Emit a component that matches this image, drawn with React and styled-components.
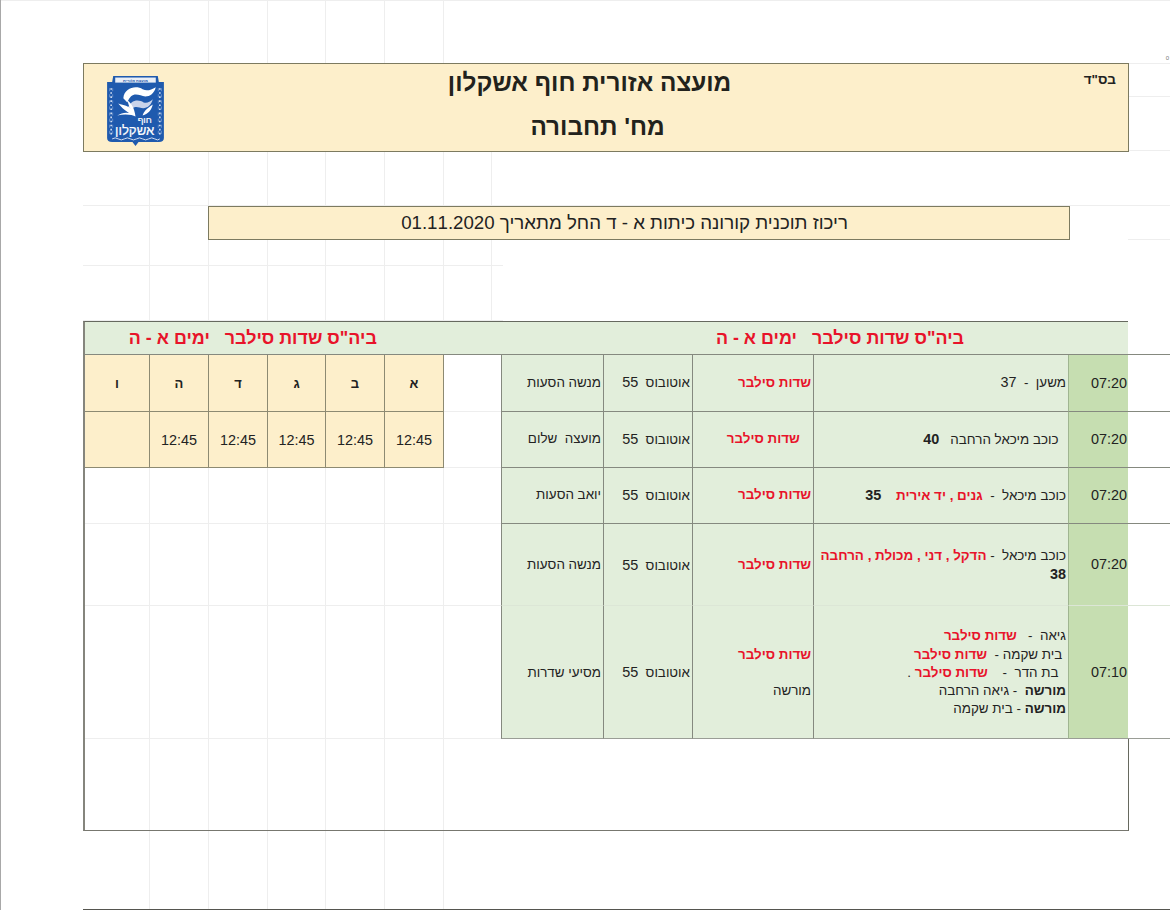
import React from 'react';
import styled, { createGlobalStyle } from 'styled-components';

const GRID = '#eeeeee';
const CREAM = '#fdefcb';
const GREEN = '#e2eedb';
const LINE = '#85897f';
const RED = '#e8132a';

// faint spreadsheet gridlines behind the sheet: [x, y, width, height]
const gridSegments = [
  [0, 0, 1170, 1],
  [149, 0, 1, 910], [208, 0, 1, 910], [267, 0, 1, 910], [325, 0, 1, 910], [384, 0, 1, 910], [443, 0, 1, 910],
  [491, 151, 1, 170],
  [83, 205, 1087, 1], [83, 265, 420, 1], [83, 320, 420, 1],
  [1128, 63, 42, 1], [1128, 96, 42, 1], [1128, 150, 42, 1], [1128, 239, 42, 1],
  [443, 411, 58, 1], [443, 467, 58, 1],
  [83, 523, 418, 1], [83, 605, 418, 1], [83, 738, 418, 1],
];
const gridBackground = gridSegments
  .map(([x, y, w, h]) => `linear-gradient(${GRID},${GRID}) ${x}px ${y}px / ${w}px ${h}px no-repeat`)
  .join(',');

const GlobalStyle = createGlobalStyle`
  html, body {
    margin: 0;
    padding: 0;
    background: #fff;
  }
  body {
    font-family: "Liberation Sans", Arial, sans-serif;
    color: #222;
  }
`;

const Sheet = styled.div`
  position: relative;
  box-sizing: border-box;
  width: 1170px;
  height: 910px;
  overflow: hidden;
  padding: 63px 0 0 83px;
  background: ${gridBackground};
  &::before {
    content: '';
    position: absolute;
    left: 0;
    top: 0;
    bottom: 0;
    width: 1px;
    background: #a8a8a8;
  }
`;
const ZeroMark = styled.span`
  position: absolute;
  right: 1px;
  top: 55px;
  font-size: 6px;
  color: #777;
`;
const Header = styled.header`
  box-sizing: border-box;
  display: grid;
  grid-template-columns: 80px 851px 1fr;
  width: 1046px;
  height: 89px;
  background: ${CREAM};
  border: 1px solid #7c7a60;
`;
const LogoSlot = styled.div`
  padding: 11px 0 0 22px;
`;
const TitleStack = styled.div`
  display: flex;
  flex-direction: column;
  align-items: center;
  gap: 14px;
  padding-top: 4px;
`;
const Title = styled.h1`
  margin: 0;
  padding-left: ${(p) => p.$shift || 0}px;
  font-size: 24.3px;
  line-height: 30px;
  font-weight: bold;
  color: #22221c;
`;
const Blessing = styled.div`
  padding: 7px 12px 0 0;
  font-size: 13.5px;
  line-height: 18px;
  font-weight: bold;
  text-align: right;
`;
const SubtitleBar = styled.div`
  box-sizing: border-box;
  width: 862px;
  height: 34px;
  margin: 54px 0 0 125px;
  padding-right: 29px;
  display: flex;
  align-items: center;
  justify-content: center;
  background: ${CREAM};
  border: 1px solid #7c7a60;
  font-size: 18.7px;
  color: #222;
`;
const Board = styled.section`
  width: 1087px;
  margin-top: 81px;
`;
const Banner = styled.div`
  box-sizing: border-box;
  display: flex;
  gap: 339px;
  width: 1045px;
  height: 34px;
  padding-right: 164px;
  align-items: center;
  background: ${GREEN};
  border-top: 1px solid #66695f;
  border-bottom: 1px solid ${LINE};
  border-left: 2px solid #85857d;
  font-size: 17.9px;
  font-weight: bold;
  color: ${RED};
  white-space: pre;
`;
const Body = styled.div`
  display: flex;
`;
const LeftPane = styled.div`
  box-sizing: border-box;
  width: 418px;
  border-left: 2px solid #85857d;
`;
const DaysGrid = styled.div`
  display: grid;
  direction: rtl;
  grid-template-columns: 60px 59px 58px 59px 59px 64px;
  grid-template-rows: 57px 56px;
  width: 359px;
`;
const DayCell = styled.div`
  display: flex;
  align-items: center;
  justify-content: center;
  background: ${CREAM};
  border-bottom: 1px solid #8d8a72;
  border-left: 1px solid #8d8a72;
  font-size: ${(p) => (p.$head ? '13px' : '14.4px')};
  font-weight: ${(p) => (p.$head ? 'bold' : 'normal')};
  &:nth-child(1), &:nth-child(7) {
    border-right: 1px solid #8d8a72;
  }
  &:nth-child(6), &:nth-child(12) {
    border-left: none;
  }
`;
const TripsGrid = styled.div`
  display: grid;
  direction: rtl;
  grid-template-columns: 42px 60px 255px 121px 89px 102px;
  grid-template-rows: 57px 56px 56px 82px 133px;
  width: 669px;
`;
const Tail = styled.div`
  border-bottom: 1px solid ${(p) => p.$line || LINE};
  box-shadow: ${(p) => (p.$first ? `0 -1px 0 ${LINE}` : 'none')};
`;
const Cell = styled.div`
  display: flex;
  flex-direction: column;
  justify-content: center;
  padding: ${(p) => (p.$nudge ? '2px' : '0')} 2px 0 3px;
  font-size: 13.4px;
  line-height: 18.3px;
  white-space: pre-wrap;
  background: ${GREEN};
  border-bottom: 1px solid ${(p) => p.$line || LINE};
  border-left: 1px solid ${LINE};
`;
const TimeCell = styled(Cell)`
  background: #c6deb1;
  font-size: 14.4px;
  padding: 0 1px 0 2px;
  border-left: 1px solid #9fb590;
`;
const Red = styled.b`
  color: ${RED};
`;
const Num = styled.span`
  font-size: 14.4px;
  font-weight: ${(p) => (p.$bold ? 'bold' : 'normal')};
`;
const Footer = styled.div`
  box-sizing: border-box;
  width: 1046px;
  height: 92px;
  border-left: 2px solid #85857d;
  border-right: 1px solid #66695f;
  border-bottom: 1px solid #77776f;
`;
const BottomRule = styled.div`
  width: 1087px;
  height: 1px;
  margin-top: 78px;
  background: #55554f;
`;
const LogoMark = styled.svg`
  display: block;
  width: 59px;
  height: 71px;
`;

const Logo = () => (
  <LogoMark viewBox="0 0 58 70">
    <path d="M1 7H6L7 1H51L52 7H57V62Q57 66 52 66H32L29 70L26 66H6Q1 66 1 62Z" fill="#1f5aae" />
    <rect x="9" y="2.5" width="40" height="5" fill="#e9eef7" />
    <text x="29" y="6.6" textAnchor="middle" direction="rtl" fontSize="4" fontWeight="bold" fill="#1f5aae">מועצה אזורית</text>
    <path d="M17 23C18 12 30 10 36 14C40 16 44 15 49 12C47 20 40 23 34 20C28 18 24 19 21 27Z" fill="#fff" />
    <path d="M21 34C24 24 32 24 37 27C40 28 43 27 46 24C44 32 38 34 33 32C29 31 26 31 24 37Z" fill="#c9d3ea" />
    <path d="M29 41C23 38 18 35 12 28C18 30 22 30 25 34C22 31 22 28 21 25C25 28 28 33 29 41ZM29 41C26 39 18 38 11 40C17 36 24 36 29 41ZM36 40C37 36 40 33 46 29C45 34 42 38 36 40Z" fill="#fff" />
    <text x="45" y="47.5" textAnchor="start" direction="rtl" fontSize="9" fill="#fff" stroke="#fff" strokeWidth="0.2">חוף</text>
    <text x="47.5" y="59.5" textAnchor="start" direction="rtl" fontSize="13" fill="#fff" stroke="#fff" strokeWidth="0.2">אשקלון</text>
    <path d="M6 63Q9 61 12 63T18 63T24 63T30 63T36 63T42 63T48 63T53 63" fill="none" stroke="#dfe7f5" strokeWidth="0.9" />
    <path d="M5 13V59M53 13V59" fill="none" stroke="#dfe7f5" strokeWidth="1.5" strokeDasharray="1.6 2.4" />
    <path d="M3.5 13V59M6.5 13V59M51.5 13V59M54.5 13V59" fill="none" stroke="#a9bfe2" strokeWidth="0.5" strokeDasharray="3 3" />
  </LogoMark>
);

const days = ['א', 'ב', 'ג', 'ד', 'ה', 'ו'];
const dayTimes = ['12:45', '12:45', '12:45', '12:45', '12:45', ''];
const DESTINATION = 'שדות סילבר';

const trips = [
  {
    time: '07:20',
    route: [<>{'משען  -  '}<Num>37</Num></>],
    destination: <Red>{DESTINATION}</Red>,
    company: 'מנשה הסעות',
  },
  {
    time: '07:20',
    route: [<>{'  כוכב מיכאל הרחבה   '}<Num $bold>40</Num></>],
    destination: <Red>{'   ' + DESTINATION}</Red>,
    company: 'מועצה  שלום',
  },
  {
    time: '07:20',
    route: [<>{'כוכב מיכאל  -  '}<Red>גנים , יד אירית</Red>{'    '}<Num $bold>35</Num></>],
    destination: <Red>{DESTINATION}</Red>,
    company: 'יואב הסעות',
  },
  {
    time: '07:20',
    route: [<>{'כוכב מיכאל  - '}<Red>הדקל , דני , מכולת , הרחבה</Red>{' '}<Num $bold>38</Num></>],
    destination: <Red>{DESTINATION}</Red>,
    company: 'מנשה הסעות',
    line: '#dce6d6',
    nudge: true,
  },
  {
    time: '07:10',
    route: [
      <>{'גיאה  -   '}<Red>{DESTINATION}</Red></>,
      <>{' בית שקמה -  '}<Red>{DESTINATION}</Red></>,
      <>{'  בת הדר  -    '}<Red>{DESTINATION}</Red>{' .'}</>,
      <><b>מורשה</b>{'  - גיאה הרחבה'}</>,
      <><b>מורשה</b>{' - בית שקמה'}</>,
    ],
    destination: <><Red>{DESTINATION}</Red><br /><br />מורשה</>,
    company: 'מסיעי שדרות',
    line: '#9a9d96',
    nudge: true,
  },
];

export default function App() {
  return (
    <>
      <GlobalStyle />
      <Sheet>
        <ZeroMark>0</ZeroMark>
        <Header>
          <LogoSlot><Logo /></LogoSlot>
          <TitleStack dir="rtl">
            <Title>מועצה אזורית חוף אשקלון</Title>
            <Title $shift={16}>מח' תחבורה</Title>
          </TitleStack>
          <Blessing dir="rtl">בס"ד</Blessing>
        </Header>
        <SubtitleBar>
          <span dir="rtl">ריכוז תוכנית קורונה כיתות א - ד החל מתאריך 01.11.2020</span>
        </SubtitleBar>
        <Board>
          <Banner dir="rtl">
            <span>ביה"ס שדות סילבר   ימים א - ה</span>
            <span>ביה"ס שדות סילבר   ימים א - ה</span>
          </Banner>
          <Body>
            <LeftPane>
              <DaysGrid>
                {days.map((day) => <DayCell key={day} $head>{day}</DayCell>)}
                {dayTimes.map((time, i) => <DayCell key={i}>{time}</DayCell>)}
              </DaysGrid>
            </LeftPane>
            <TripsGrid>
              {trips.map((trip, i) => (
                <React.Fragment key={i}>
                  <Tail $line={trip.line} $first={i === 0} />
                  <TimeCell $line={trip.line}>{trip.time}</TimeCell>
                  <Cell $line={trip.line} $nudge={trip.nudge}>
                    {trip.route.map((part, j) => <div key={j}>{part}</div>)}
                  </Cell>
                  <Cell $line={trip.line} $nudge={trip.nudge}><div>{trip.destination}</div></Cell>
                  <Cell $line={trip.line} $nudge={trip.nudge}><div>{'אוטובוס  '}<Num>55</Num></div></Cell>
                  <Cell $line={trip.line} $nudge={trip.nudge}>{trip.company}</Cell>
                </React.Fragment>
              ))}
            </TripsGrid>
          </Body>
          <Footer />
          <BottomRule />
        </Board>
      </Sheet>
    </>
  );
}
